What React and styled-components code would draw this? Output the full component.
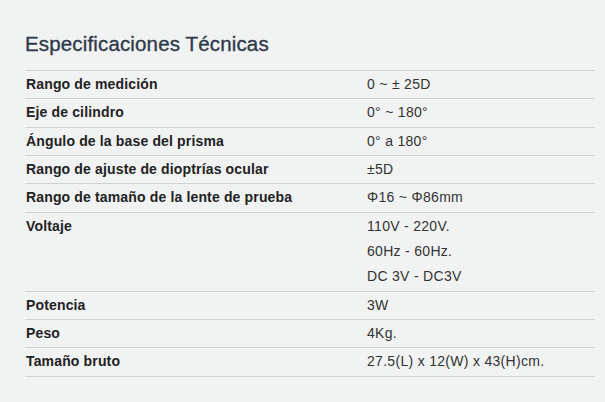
import React from 'react';
import styled, { createGlobalStyle } from 'styled-components';

const GlobalStyle = createGlobalStyle`
  html, body {
    margin: 0;
    padding: 0;
    background: #f1f2f2;
  }
  body {
    font-family: "Liberation Sans", Arial, Helvetica, sans-serif;
  }
`;

const Page = styled.div`
  padding: 32px 10px 0 25px;
`;

const Title = styled.h2`
  margin: 0 0 14px;
  font-size: 20.5px;
  line-height: 24px;
  font-weight: normal;
  color: #2f3a4a;
  letter-spacing: 0.15px;
  -webkit-text-stroke: 0.35px #2f3a4a;
`;

const SpecTable = styled.div`
  border-top: 1px solid #cfd0d0;
`;

const Row = styled.div`
  display: grid;
  grid-template-columns: 60% 40%;
  padding: 1px 0;
  border-bottom: 1px solid #cfd0d0;
  font-size: 14px;
  line-height: 25.33px;
`;

const Label = styled.div`
  font-weight: bold;
  color: #222;
  padding-left: 1px;
  letter-spacing: 0.15px;
`;

const Value = styled.div`
  color: #333;
  letter-spacing: 0.3px;
`;

const Line = styled.div``;

const specs = [
  ['Rango de medición', ['0 ~ ± 25D']],
  ['Eje de cilindro', ['0° ~ 180°']],
  ['Ángulo de la base del prisma', ['0° a 180°']],
  ['Rango de ajuste de dioptrías ocular', ['±5D']],
  ['Rango de tamaño de la lente de prueba', ['Φ16 ~ Φ86mm']],
  ['Voltaje', ['110V - 220V.', '60Hz - 60Hz.', 'DC 3V - DC3V']],
  ['Potencia', ['3W']],
  ['Peso', ['4Kg.']],
  ['Tamaño bruto', ['27.5(L) x 12(W) x 43(H)cm.']],
];

const App = () => (
  <Page>
    <GlobalStyle />
    <Title>Especificaciones Técnicas</Title>
    <SpecTable>
      {specs.map(([label, values]) => (
        <Row key={label}>
          <Label>{label}</Label>
          <Value>
            {values.map((v) => (
              <Line key={v}>{v}</Line>
            ))}
          </Value>
        </Row>
      ))}
    </SpecTable>
  </Page>
);

export default App;
